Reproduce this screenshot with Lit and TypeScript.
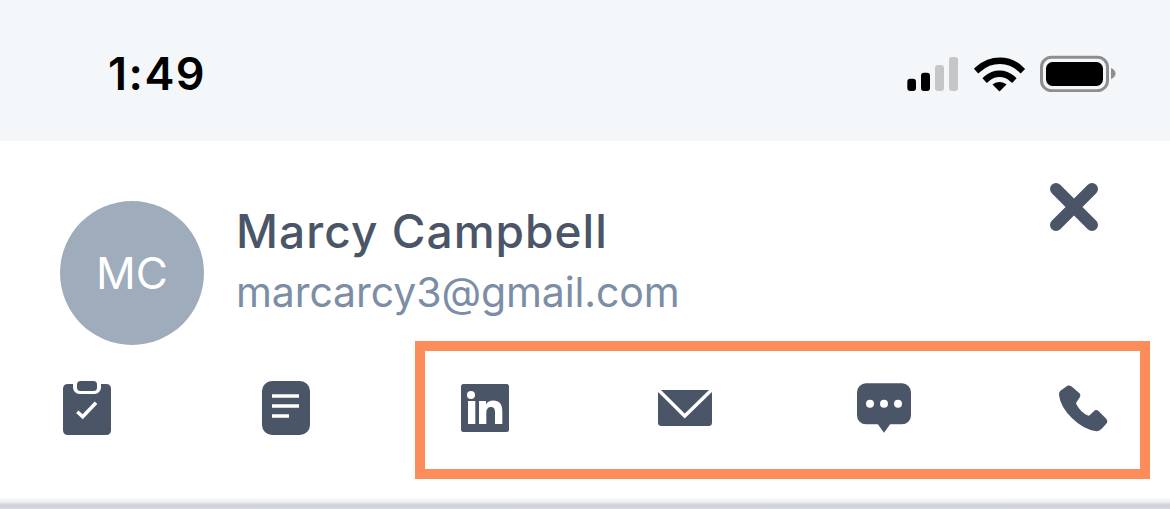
import { LitElement, css, html } from "lit";
import { customElement } from "lit/decorators.js";

@customElement("app-root")
export class AppRoot extends LitElement {
  // Battery, wifi and signal drawn as one strip, 209x37
  renderStatusIcons() {
    return html`
      <svg class="status-icons" width="209" height="37" viewBox="0 0 209 37">
        <rect x="0.3" y="23.7" width="8.7" height="12.3" rx="3" fill="#000" />
        <rect x="14" y="17.7" width="9" height="18.3" rx="3" fill="#000" />
        <rect x="28" y="10" width="9" height="26" rx="3" fill="#c6c6c6" />
        <rect x="42" y="2" width="9" height="34" rx="3" fill="#c6c6c6" />
        <path d="M71.5 14 C84 3 102 3 113.5 14" fill="none" stroke="#000" stroke-width="6.5" stroke-linecap="square" />
        <path d="M80 23.5 C87 17 98 17 105 23.5" fill="none" stroke="#000" stroke-width="6.5" stroke-linecap="square" />
        <path d="M85.5 29.5 C89 26 96 26 99.5 29.5 L92.5 36.5 Z" fill="#000" />
        <rect x="134.5" y="2.2" width="66" height="33.5" rx="10" fill="none" stroke="#8e8e8e" stroke-width="3" />
        <rect x="139" y="7" width="57" height="24" rx="6.5" fill="#000" />
        <path d="M204 13 C207 14 208.5 16.5 208.5 18.5 C208.5 20.5 207 23 204 24 Z" fill="#8e8e8e" />
      </svg>
    `;
  }

  renderActions() {
    return html`
      <svg class="action" viewBox="0 0 54 54">
        <path d="M8 3 H46 Q51 3 51 8 V49 Q51 54 46 54 H8 Q3 54 3 49 V8 Q3 3 8 3 Z" />
        <rect x="13" y="-4" width="28" height="17" rx="6.5" fill="#fff" />
        <rect x="17" y="0" width="20" height="10" rx="3.5" />
        <path class="line" d="M17.3 30.7 L22.7 35.7 L36 21.7" fill="none" />
      </svg>
      <svg class="action" viewBox="0 0 54 54">
        <rect x="3" y="0" width="48" height="54" rx="10" />
        <path class="line" d="M13 15 H40 M13 25 H40 M13 35 H30" fill="none" />
      </svg>
      <svg class="action" viewBox="0 0 54 54">
        <rect x="3" y="3" width="48" height="48" rx="2.5" />
        <circle cx="13" cy="14" r="4" fill="#fff" />
        <rect x="10" y="20" width="7.3" height="23" fill="#fff" />
        <path d="M21 20 H28 V23.2 C29.6 20.8 32 19.5 35 19.5 C41.5 19.5 44.3 23.4 44.3 30 V43 H37 V31.5 C37 27.8 35.8 26 33 26 C30 26 28.3 28 28.3 31.5 V43 H21 Z" fill="#fff" />
      </svg>
      <svg class="action" viewBox="0 0 54 54">
        <rect x="0" y="9" width="54" height="36" rx="3.5" />
        <path d="M0.5 9 L26.7 35 L53.5 9" fill="none" stroke="#fff" stroke-width="3.4" />
      </svg>
      <svg class="action" viewBox="0 0 54 54">
        <rect x="0" y="2.3" width="54" height="41" rx="9" />
        <path d="M20 42 H34 L27 51.7 Z" />
        <circle cx="13" cy="22.7" r="4" fill="#fff" />
        <circle cx="27" cy="22.7" r="4" fill="#fff" />
        <circle cx="41" cy="22.7" r="4" fill="#fff" />
      </svg>
      <svg class="action" viewBox="0 0 54 54">
        <path
          d="M12 5.5 C13 5.2 14 5.5 15 6.3 L22.5 12.8 C23.5 13.8 23.5 15 22.8 16 L19.5 21 C19 22 19 23 19.6 24 C22 28.5 27 33.5 31.5 35.5 C32.5 36 33.5 35.8 34.3 35 L38.5 31 C39.5 30 40.8 30 41.8 30.8 L49.5 38.5 C50.5 39.8 50.5 41 49.5 42 L44.5 47.5 C43.5 48.8 42 49.3 40.5 49.2 C24 47.5 6 29 4 14 C3.8 12.8 4.2 11.5 5 10.5 Z"
          stroke="#4a5568"
          stroke-width="2"
          stroke-linejoin="round"
        />
      </svg>
    `;
  }

  render() {
    return html`
      <div class="status-bar">
        <span class="time">1:49</span>
        ${this.renderStatusIcons()}
      </div>
      <div class="panel">
        <div class="header">
          <div class="avatar">MC</div>
          <div class="details">
            <div class="name">Marcy Campbell</div>
            <div class="email">marcarcy3@gmail.com</div>
          </div>
          <svg class="close" viewBox="0 0 50 50">
            <path d="M6 6 L42 42 M42 6 L6 42" fill="none" stroke="#4a5568" stroke-width="12" stroke-linecap="round" />
          </svg>
        </div>
        <div class="actions">${this.renderActions()}</div>
      </div>
      <div class="highlight"></div>
    `;
  }

  static styles = css`
    :host {
      display: block;
      position: relative;
      width: 1170px;
      height: 509px;
      overflow: hidden;
      background: linear-gradient(
        to bottom,
        #fff 497px,
        #eceef1 502px,
        #cdd0d5 505px,
        #d6d9dd 509px
      );
      font-family: Inter, "Liberation Sans", sans-serif;
    }

    .status-bar {
      display: flex;
      align-items: center;
      justify-content: space-between;
      height: 141px;
      padding: 7px 54px 0 108px;
      box-sizing: border-box;
      background: #f4f7fa;
    }

    .status-icons {
      display: block;
      margin-top: -1px;
    }

    .time {
      font-size: 45px;
      font-weight: 600;
      letter-spacing: 1.5px;
      color: #000;
      line-height: 54px;
    }

    .panel {
      height: 356px;
      padding: 60px 60px 0;
      box-sizing: border-box;
      background: #fff;
    }

    .header {
      display: flex;
      align-items: flex-start;
    }

    .avatar {
      display: flex;
      align-items: center;
      justify-content: center;
      flex: none;
      width: 144px;
      height: 144px;
      border-radius: 50%;
      background: #9eacbc;
      color: #fff;
      font-size: 44px;
    }

    .details {
      flex: 1;
      padding: 1px 0 0 32px;
    }

    .name {
      font-size: 46px;
      font-weight: 500;
      letter-spacing: 1.05px;
      line-height: 58px;
      color: #4a5568;
    }

    .email {
      font-size: 41px;
      letter-spacing: -0.1px;
      line-height: 60px;
      margin-top: 2px;
      color: #7c8ea6;
    }

    .close {
      flex: none;
      width: 50px;
      height: 50px;
      margin: -18px 10px 0 0;
    }

    .actions {
      display: flex;
      justify-content: space-between;
      margin-top: 36px;
    }

    .action {
      display: block;
      width: 54px;
      height: 54px;
      fill: #4a5568;
      overflow: visible;
    }

    .action .line {
      stroke: #fff;
      stroke-width: 3.5;
    }

    .highlight {
      position: absolute;
      left: 415px;
      top: 341px;
      width: 735px;
      height: 138px;
      box-sizing: border-box;
      border: 10px solid #fc8c5a;
    }
  `;
}
